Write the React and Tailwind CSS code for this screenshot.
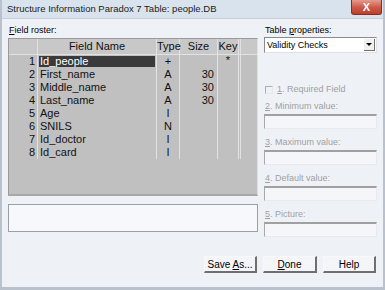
import React from "react";

const rows = [
  ["1", "Id_people", "+", "", "*"],
  ["2", "First_name", "A", "30", ""],
  ["3", "Middle_name", "A", "30", ""],
  ["4", "Last_name", "A", "30", ""],
  ["5", "Age", "I", "", ""],
  ["6", "SNILS", "N", "", ""],
  ["7", "Id_doctor", "I", "", ""],
  ["8", "Id_card", "I", "", ""],
];

const ui = { fontFamily: '"Liberation Sans Narrow", "Liberation Sans", Arial, sans-serif' };

function Field({ n, label }) {
  return (
    <div className="flex flex-col">
      <div className="h-[11px] leading-[11px] text-[9px] text-[#a0a0a0] pl-[1px]">
        <span className="underline">{n}</span>. {label}
      </div>
      <div className="mt-[2px] h-[15px] border-t-[2px] border-l-[1px] border-r-[1px] border-b-[1px] border-t-[#a0a0a0] border-l-[#a8a8a8] border-r-[#e6e9ee] border-b-[#e6e9ee] bg-[#f4f6fa]" />
    </div>
  );
}

function Btn({ children, w }) {
  return (
    <div
      className={`${w} h-[17px] flex items-center justify-center text-[10px] text-black border-t border-l border-t-[#f8f8f8] border-l-[#f8f8f8] border-b-[2px] border-r-[2px] border-b-[#6f6f6f] border-r-[#6f6f6f] bg-[#f3f5f9]`}
    >
      {children}
    </div>
  );
}

export default function App() {
  return (
    <div
      className="w-[385px] h-[290px] bg-[#eef2f7] border-l-[2px] border-r-[2px] border-b-[3px] border-[#b9c2cc] flex flex-col overflow-hidden"
      style={ui}
    >
      {/* title bar */}
      <div className="h-[19px] shrink-0 flex items-start justify-between bg-[#d9e3ee] border-b border-[#c7d0da]">
        <div className="pl-[5px] pt-[3px] text-[9.5px] leading-[12px] text-[#1a1a1a]">
          Structure Information Paradox 7 Table: people.DB
        </div>
        <div className="mr-[1px] w-[31px] h-[15px] rounded-b-[3px] bg-gradient-to-b from-[#e39a8e] via-[#cf5a4a] to-[#b9402f] border border-[#8a2a20] border-t-0 flex items-center justify-center text-white text-[11px] font-bold leading-none" style={{ fontFamily: '"Liberation Sans", Arial, sans-serif' }}>
          X
        </div>
      </div>

      <div className="flex flex-1 pl-[6px] pr-[5px] pt-[5px] gap-[6px]">
        {/* left column */}
        <div className="w-[250px] flex flex-col">
          <div className="h-[12px] leading-[12px] text-[9px] text-black pl-[1px]">
            <span className="underline">F</span>ield roster:
          </div>
          <div className="mt-[2px] h-[158px] bg-[#c0c0c0] border-t border-l border-[#9a9a9a] border-b-[2px] border-b-[#a8a8a8] border-r border-r-[#e0e0e0] flex flex-col">
            {/* header */}
            <div className="h-[16px] flex text-[11px] leading-[15px] text-[#111] bg-[#c8c8c8] border-b border-[#e2e2e2]">
              <div className="w-[29px] border-r border-[#e2e2e2]" />
              <div className="w-[119px] text-center border-r border-[#e2e2e2]">Field Name</div>
              <div className="w-[23px] text-center border-r border-[#e2e2e2]">Type</div>
              <div className="w-[38px] text-center border-r border-[#e2e2e2]">Size</div>
              <div className="w-[21px] text-center border-r border-[#e2e2e2]">Key</div>
              <div className="w-[2px] border-r border-[#e2e2e2]" />
            </div>
            {/* rows */}
            <div className="flex flex-col">
              {rows.map((r, i) => (
                <div key={i} className="h-[13px] flex text-[11px] leading-[13px] text-[#111]">
                  <div className="w-[29px] text-right pr-[2px] border-r border-[#e2e2e2]">{r[0]}</div>
                  <div className="w-[119px] border-r border-[#e2e2e2] flex items-center">
                    {i === 0 ? (
                      <div className="ml-[1px] w-[116px] h-[11px] bg-[#3a3a3a] text-white leading-[11px] pl-[1px]">
                        {r[1]}
                      </div>
                    ) : (
                      <div className="pl-[2px]">{r[1]}</div>
                    )}
                  </div>
                  <div className="w-[23px] text-center border-r border-[#e2e2e2]">{r[2]}</div>
                  <div className="w-[38px] text-right pr-[3px] border-r border-[#e2e2e2]">{r[3]}</div>
                  <div className="w-[21px] text-center border-r border-[#e2e2e2] leading-[10px]">{r[4]}</div>
                  <div className="w-[2px] border-r border-[#e2e2e2]" />
                </div>
              ))}
            </div>
          </div>
          <div className="mt-[8px] h-[28px] border border-[#9aa0a8] bg-[#f6f8fb]" />
        </div>

        {/* right column */}
        <div className="w-[113px] flex flex-col">
          <div className="h-[12px] leading-[12px] text-[9px] text-black pl-[1px]">
            Table <span className="underline">p</span>roperties:
          </div>
          <div className="mt-[1px] h-[16px] bg-white border-t border-l border-[#8a8a8a] border-r border-b border-r-[#e0e0e0] border-b-[#e0e0e0] flex items-center">
            <div className="flex-1 pl-[2px] text-[9px] text-black leading-[14px]">Validity Checks</div>
            <div className="w-[11px] h-[12px] mr-[1px] bg-[#f0f0f0] border-r border-b border-[#707070] flex items-center justify-center">
              <div className="w-0 h-0 border-l-[3px] border-r-[3px] border-t-[3px] border-l-transparent border-r-transparent border-t-black" />
            </div>
          </div>

          <div className="mt-[31px] flex items-center h-[11px]">
            <div className="w-[8px] h-[8px] border-t border-l border-[#b0b0b0] border-r border-b border-r-[#e8e8e8] border-b-[#e8e8e8] bg-[#eef2f7] ml-[1px]" />
            <div className="ml-[4px] text-[9px] text-[#a0a0a0]">
              <span className="underline">1</span>. Required Field
            </div>
          </div>

          <div className="mt-[6px] flex flex-col gap-[8px]">
            <Field n="2" label="Minimum value:" />
            <Field n="3" label="Maximum value:" />
            <Field n="4" label="Default value:" />
            <Field n="5" label="Picture:" />
          </div>
        </div>
      </div>

      <div className="flex justify-end gap-[6px] pr-[7px] pb-[14px]">
        <Btn w="w-[53px]"><span>Save <span className="underline">A</span>s...</span></Btn>
        <Btn w="w-[54px]"><span><span className="underline">D</span>one</span></Btn>
        <Btn w="w-[53px]">Help</Btn>
      </div>
    </div>
  );
}
